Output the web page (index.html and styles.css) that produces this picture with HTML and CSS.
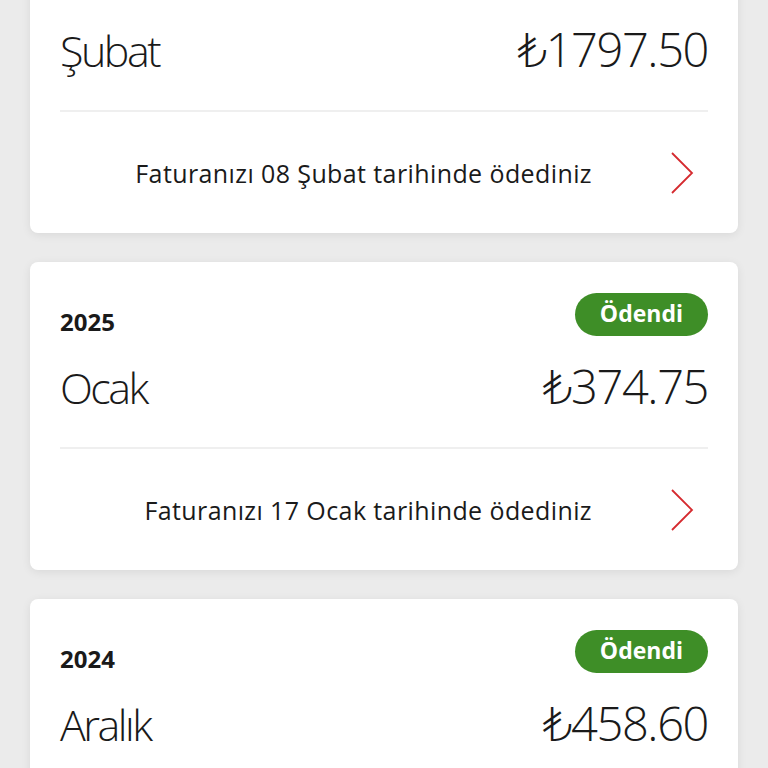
FILE: index.html
```html
<!DOCTYPE html>
<html lang="tr">
<head>
  <meta charset="UTF-8" />
  <meta name="viewport" content="width=device-width, initial-scale=1.0" />
  <title>Faturalarım</title>
  <link rel="stylesheet" href="styles.css">
</head>
<body>
  <main class="faturalar">

    <div class="fatura">
      <div class="fatura-ust">
        <span class="yil">2025</span>
        <span class="durum">Ödendi</span>
      </div>
      <div class="fatura-tutar">
        <span class="ay">Şubat</span>
        <span class="tutar">₺1797.50</span>
      </div>
      <div class="fatura-alt">
        <span class="odeme">Faturanızı 08 Şubat tarihinde ödediniz</span>
        <svg class="ok" viewBox="0 0 24 42" width="24" height="42">
          <polyline points="2,1 22,21 2,41" fill="none" stroke="#d52a2f" stroke-width="1.8"/>
        </svg>
      </div>
    </div>

    <div class="fatura">
      <div class="fatura-ust">
        <span class="yil">2025</span>
        <span class="durum">Ödendi</span>
      </div>
      <div class="fatura-tutar">
        <span class="ay">Ocak</span>
        <span class="tutar">₺374.75</span>
      </div>
      <div class="fatura-alt">
        <span class="odeme">Faturanızı 17 Ocak tarihinde ödediniz</span>
        <svg class="ok" viewBox="0 0 24 42" width="24" height="42">
          <polyline points="2,1 22,21 2,41" fill="none" stroke="#d52a2f" stroke-width="1.8"/>
        </svg>
      </div>
    </div>

    <div class="fatura">
      <div class="fatura-ust">
        <span class="yil">2024</span>
        <span class="durum">Ödendi</span>
      </div>
      <div class="fatura-tutar">
        <span class="ay">Aralık</span>
        <span class="tutar">₺458.60</span>
      </div>
      <div class="fatura-alt">
        <span class="odeme">Faturanızı 10 Aralık tarihinde ödediniz</span>
        <svg class="ok" viewBox="0 0 24 42" width="24" height="42">
          <polyline points="2,1 22,21 2,41" fill="none" stroke="#d52a2f" stroke-width="1.8"/>
        </svg>
      </div>
    </div>

  </main>
</body>
</html>
```

FILE: styles.css
```css
body {
  font-family: 'Open Sans', 'DejaVu Sans', sans-serif;
  background: #ebebeb;
  margin: 0;
  color: #1a1a1a;
  overflow: hidden;
}

.faturalar {
  display: flex;
  flex-direction: column;
  gap: 29px;
  padding: 0 30px;
  margin-top: -75px;
}

.fatura {
  background: #ffffff;
  border-radius: 8px;
  box-shadow: 0 2px 10px rgba(0,0,0,0.08);
  height: 308px;
  box-sizing: border-box;
  padding: 31px 30px 0;
  display: flex;
  flex-direction: column;
}

.fatura-ust {
  display: flex;
  justify-content: space-between;
  align-items: center;
  height: 43px;
}

.yil {
  font-size: 24px;
  font-weight: 700;
  padding-top: 13px;
}

.durum {
  background: #3e8e27;
  color: #ffffff;
  font-size: 23px;
  font-weight: 700;
  height: 43px;
  line-height: 41px;
  padding: 0 25px;
  border-radius: 22px;
  box-sizing: border-box;
}

.fatura-tutar {
  display: flex;
  justify-content: space-between;
  align-items: baseline;
  height: 113px;
  padding-top: 18px;
  box-sizing: border-box;
  border-bottom: 2px solid #efefef;
}

.ay {
  font-size: 43px;
  font-weight: 300;
  letter-spacing: -2.5px;
}

.tutar {
  font-size: 47px;
  font-weight: 300;
  letter-spacing: -1.4px;
}

.fatura-alt {
  flex: 1;
  display: flex;
  justify-content: flex-end;
  align-items: center;
}

.odeme {
  font-size: 25px;
  letter-spacing: 0.4px;
  margin-right: 78px;
}

.ok {
  margin-right: 14px;
}
```
